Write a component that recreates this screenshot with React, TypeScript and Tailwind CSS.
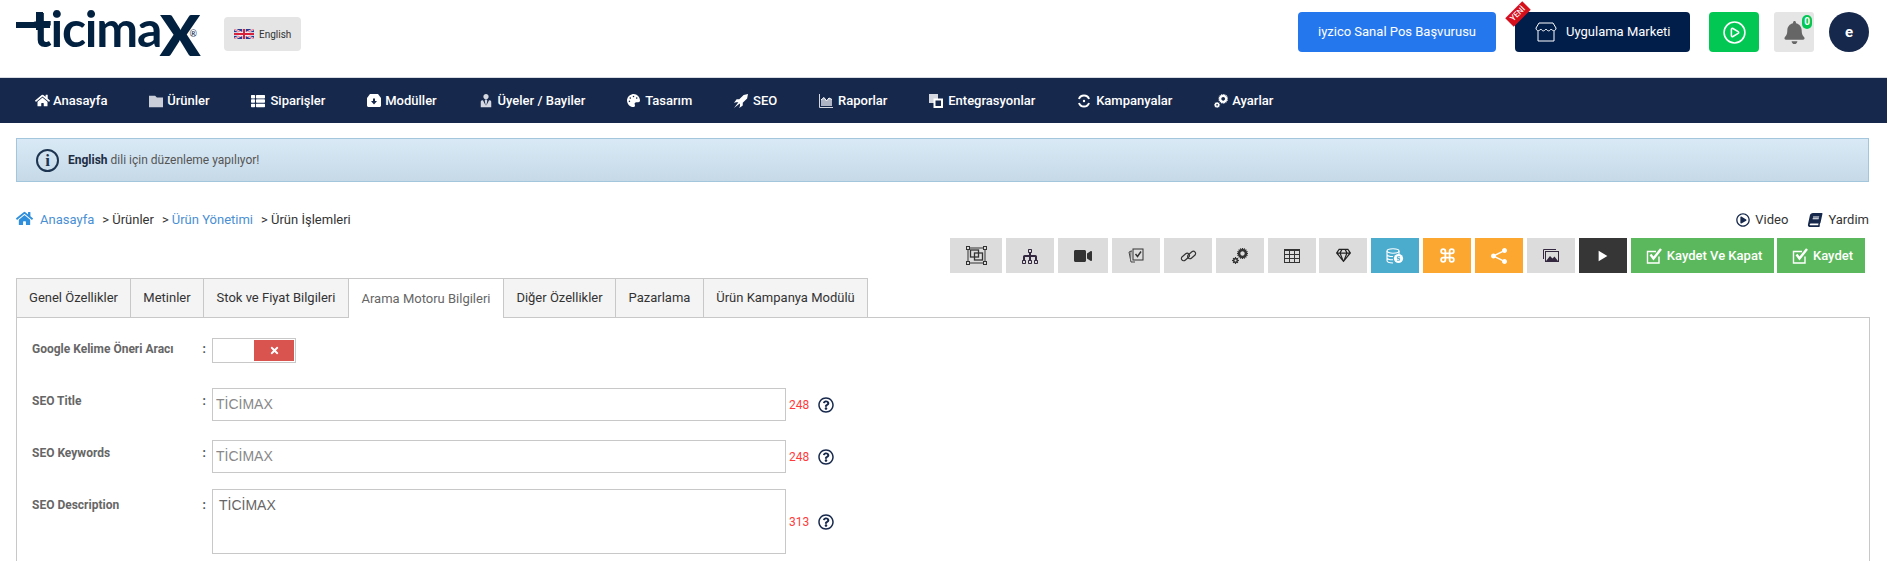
import type { ReactNode } from "react";
import {
  ImFolder,
  ImUserTie,
  ImRocket,
  ImCogs,
  ImShare2,
  ImPlay3,
  ImTree,
  ImTable2,
} from "react-icons/im";
import {
  FaBell,
  FaBook,
  FaHome,
  FaPalette,
  FaRegGem,
  FaRegPlayCircle,
  FaRegQuestionCircle,
  FaThList,
  FaTimes,
  FaVideo,
} from "react-icons/fa";
import { CirclePlay, Command } from "lucide-react";

function FlagUk() {
  return (
    <svg width="20" height="10" viewBox="0 0 60 30" className="shrink-0">
      <rect width="60" height="30" fill="#2b3a8f" />
      <path d="M0 0L60 30M60 0L0 30" stroke="#fff" strokeWidth="6" />
      <path d="M0 0L60 30M60 0L0 30" stroke="#d8213a" strokeWidth="2" />
      <path d="M30 0V30M0 15H60" stroke="#fff" strokeWidth="10" />
      <path d="M30 0V30M0 15H60" stroke="#d8213a" strokeWidth="6" />
    </svg>
  );
}

function CheckBox({ size = 16 }: { size?: number }) {
  return (
    <svg width={size} height={size} viewBox="0 0 16 16" fill="none" className="shrink-0">
      <path d="M13 8.5V15H1.5V3.5H10" stroke="#fff" strokeWidth="1.4" />
      <path d="M4.5 6.5L7.5 10.5L15 1" stroke="#fff" strokeWidth="2.4" />
    </svg>
  );
}

function MarketIcon() {
  return (
    <svg width="22" height="20" viewBox="0 0 22 20" fill="none" stroke="#fff" strokeWidth="1" className="shrink-0">
      <path d="M4 1H18L21 6C21 9 18 9.500 16 7C14.500 9.500 13 9.500 11 7C9 9.500 7.500 9.500 6 7C4 9.500 1 9 1 6Z" />
      <path d="M3 9V19H19V9" />
    </svg>
  );
}

function DrawerIcon() {
  return (
    <svg width="14" height="13" viewBox="0 0 14 13">
      <path d="M3 0H11L14 4V11.500C14 12.300 13.300 13 12.500 13H1.500C0.700 13 0 12.300 0 11.500V4Z" fill="#fff" />
      <path d="M6 4.500H8V7H10L7 10.500L4 7H6Z" fill="#16284c" />
    </svg>
  );
}

function ChartIcon() {
  return (
    <svg width="14" height="14" viewBox="0 0 14 14">
      <path d="M0.500 0V13.500H14" stroke="#d5d8e0" strokeWidth="1" fill="none" />
      <path d="M2 12V6L5 3.500L7.500 7L10 4L13 5.500V12Z" fill="#aeb4c4" />
      <path d="M2 6L5 3.500L7.500 7L10 4L13 5.500" stroke="#fff" strokeWidth="1" fill="none" />
    </svg>
  );
}

function CloneIcon() {
  return (
    <svg width="14" height="14" viewBox="0 0 14 14">
      <rect x="0" y="0" width="9" height="9" fill="#d5d8e0" />
      <rect x="4.500" y="4.500" width="9.500" height="9.500" fill="#fff" />
      <rect x="6.500" y="6.500" width="5.500" height="5.500" fill="#16284c" />
    </svg>
  );
}

function CampaignIcon() {
  return (
    <svg width="14" height="14" viewBox="0 0 14 14" fill="none" stroke="#fff">
      <path d="M2 5C3 2 5 1.500 7 1.500C9 1.500 11 2 12 5" strokeWidth="2" />
      <path d="M2 9C3 12 5 12.500 7 12.500C9 12.500 11 12 12 9" strokeWidth="2" />
      <circle cx="7" cy="7" r="1.200" fill="#fff" stroke="none" />
    </svg>
  );
}

function GroupIcon() {
  return (
    <svg width="21" height="19" viewBox="0 0 21 19" fill="none" stroke="#333">
      <rect x="2" y="2" width="17" height="15" strokeWidth="1" />
      <rect x="0.500" y="0.500" width="3" height="3" fill="#dcdcdc" />
      <rect x="17.500" y="0.500" width="3" height="3" fill="#dcdcdc" />
      <rect x="0.500" y="15.500" width="3" height="3" fill="#dcdcdc" />
      <rect x="17.500" y="15.500" width="3" height="3" fill="#dcdcdc" />
      <rect x="4.500" y="4" width="8" height="7" strokeWidth="1.300" />
      <rect x="8.500" y="7" width="8" height="7" strokeWidth="1.300" />
    </svg>
  );
}

function ChainIcon() {
  return (
    <svg width="17" height="12" viewBox="0 0 17 12" fill="none" stroke="#333" strokeWidth="1.200">
      <rect x="0.800" y="5" width="9" height="4.500" rx="2.250" transform="rotate(-40 5 7)" />
      <rect x="7.200" y="2.500" width="9" height="4.500" rx="2.250" transform="rotate(-40 12 5)" />
    </svg>
  );
}

function ProductImagesIcon() {
  return (
    <svg width="16" height="15" viewBox="0 0 16 15" fill="none">
      <path d="M4 3L1 4L3 14L7 14" stroke="#444" strokeWidth="1" />
      <path d="M3 2.500L2.500 12.500" stroke="#666" strokeWidth="1" />
      <rect x="5" y="1" width="10" height="11" fill="#ddd" stroke="#333" strokeWidth="1" />
      <path d="M7.500 6L9.500 8.500L13 3.500" stroke="#333" strokeWidth="1.500" />
    </svg>
  );
}

function PicturesIcon() {
  return (
    <svg width="16" height="13" viewBox="0 0 16 13" fill="none" stroke="#33283f">
      <path d="M0.500 10V0.500H13" strokeWidth="1" />
      <rect x="2.500" y="2.500" width="13" height="10" fill="#dcdcdc" strokeWidth="1" />
      <path d="M3 12L7 7L9.500 9.500L11.500 7.500L15 12Z" fill="#33283f" stroke="none" />
    </svg>
  );
}

function CoinsIcon() {
  return (
    <svg width="18" height="16" viewBox="0 0 18 16" fill="none" stroke="#fff" strokeWidth="1.100">
      <ellipse cx="7" cy="3" rx="6" ry="2.200" />
      <path d="M1 3V12.500C1 14 4 15 7 15M13 3V6M1 6.200C1 7.600 4 8.500 7 8.500M1 9.500C1 11 4 11.800 7 11.800" />
      <circle cx="12.500" cy="10.500" r="4.600" fill="#fff" stroke="none" />
      <path d="M14 8.800H11.400V10.500H13.600V12.200H11" stroke="#4bacce" strokeWidth="1" />
    </svg>
  );
}

const navItems: { label: string; icon: ReactNode; gap: string }[] = [
  { label: "Anasayfa", icon: <FaHome className="text-white" size={15} />, gap: "gap-[3px]" },
  { label: "Ürünler", icon: <ImFolder className="text-[#c9ced9]" size={14} />, gap: "gap-[4px]" },
  { label: "Siparişler", icon: <FaThList className="text-white" size={14} />, gap: "gap-[5px]" },
  { label: "Modüller", icon: <DrawerIcon />, gap: "gap-[4px]" },
  { label: "Üyeler / Bayiler", icon: <ImUserTie className="text-[#d5d8e0]" size={14} />, gap: "gap-[5px]" },
  { label: "Tasarım", icon: <FaPalette className="text-white" size={13} />, gap: "gap-[5px]" },
  { label: "SEO", icon: <ImRocket className="text-white" size={14} />, gap: "gap-[5px]" },
  { label: "Raporlar", icon: <ChartIcon />, gap: "gap-[5px]" },
  { label: "Entegrasyonlar", icon: <CloneIcon />, gap: "gap-[5px]" },
  { label: "Kampanyalar", icon: <CampaignIcon />, gap: "gap-[5px]" },
  { label: "Ayarlar", icon: <ImCogs className="text-white" size={14} />, gap: "gap-[4px]" },
];

const toolButtons: { icon: ReactNode; cls: string }[] = [
  { icon: <GroupIcon />, cls: "w-[52px] bg-[#dcdcdc]" },
  { icon: <ImTree size={16} className="text-[#33283f]" />, cls: "w-[48px] bg-[#dcdcdc]" },
  { icon: <FaVideo size={18} className="text-[#333]" />, cls: "w-[50px] bg-[#dcdcdc]" },
  { icon: <ProductImagesIcon />, cls: "w-[48px] bg-[#dcdcdc]" },
  { icon: <ChainIcon />, cls: "w-[48px] bg-[#dcdcdc]" },
  { icon: <ImCogs size={16} className="text-[#333]" />, cls: "w-[48px] bg-[#dcdcdc]" },
  { icon: <ImTable2 size={16} className="text-[#333]" />, cls: "w-[48px] bg-[#dcdcdc] -mr-px" },
  { icon: <FaRegGem size={15} className="text-[#222]" />, cls: "w-[48px] bg-[#dcdcdc]" },
  { icon: <CoinsIcon />, cls: "w-[48px] bg-[#4bacce]" },
  { icon: <Command size={17} strokeWidth={2.5} className="text-white" />, cls: "w-[48px] bg-[#fca72f]" },
  { icon: <ImShare2 size={16} className="text-white" />, cls: "w-[48px] bg-[#fca72f]" },
  { icon: <PicturesIcon />, cls: "w-[48px] bg-[#dcdcdc]" },
  { icon: <ImPlay3 size={14} className="text-white" />, cls: "w-[48px] bg-[#363636]" },
];

const tabs = [
  { label: "Genel Özellikler", w: "w-[115px]" },
  { label: "Metinler", w: "w-[73px]" },
  { label: "Stok ve Fiyat Bilgileri", w: "w-[145px]" },
  { label: "Arama Motoru Bilgileri", w: "w-[155px]", active: true },
  { label: "Diğer Özellikler", w: "w-[112px]" },
  { label: "Pazarlama", w: "w-[88px]" },
  { label: "Ürün Kampanya Modülü", w: "w-[164px]" },
];

function FieldLabel({ children }: { children: ReactNode }) {
  return (
    <div className="flex w-[180px] shrink-0 justify-between pr-[6px] text-[12px] font-bold leading-[16px] text-[#666]">
      <span>{children}</span>
      <span className="text-[#555]">:</span>
    </div>
  );
}

function SeoField({ label, count }: { label: string; count: string }) {
  return (
    <div className="flex items-start">
      <div className="pt-[5px]">
        <FieldLabel>{label}</FieldLabel>
      </div>
      <input
        readOnly
        value="TİCİMAX"
        className="h-[33px] w-[574px] border border-[#c8c8c8] bg-white px-[3px] pb-[2px] font-['Liberation_Sans',sans-serif] text-[14px] text-[#888] outline-none"
      />
      <div className="flex h-[33px] items-center">
        <span className="ml-[3px] text-[12px] text-[#ff3b3b]">{count}</span>
        <FaRegQuestionCircle size={16} className="ml-[9px] mt-[1px] text-[#16284c]" />
      </div>
    </div>
  );
}

export default function App() {
  return (
    <div className="h-[561px] w-[1887px] overflow-hidden bg-white font-['Roboto',sans-serif]">
      {/* Header */}
      <header className="flex h-[77px] items-start justify-between pl-4 pr-[18px]">
        <div className="flex items-start">
          <div className="relative mt-[2px] flex h-[60px] w-[180px] items-start pl-[17px] font-['Lato',sans-serif] font-bold text-[#02203f]">
            <span className="mt-[1px] text-[50px] leading-[50px] tracking-[-1.2px]">ticima</span>
            <span className="-ml-[2px] mt-[1px] text-[80px] leading-[44px]">x</span>
            <span className="absolute left-0 top-[20px] h-[6px] w-[34px] bg-[#02203f]" />
            <span className="absolute left-[20px] top-[10px] h-[18px] w-[7px] bg-[#02203f]" />
            <span className="absolute right-[-1px] top-[27px] text-[9px] font-normal leading-[10px]">®</span>
          </div>
          <div className="ml-[28px] mt-[17px] flex h-[34px] w-[77px] items-center gap-[5px] rounded-[4px] bg-[#e5e5e5] pl-[10px] text-[10px] text-[#333]">
            <FlagUk />
            English
          </div>
        </div>
        <div className="mt-[12px] flex items-start">
          <button className="h-[40px] w-[198px] rounded-[4px] bg-[#2577ee] text-[13px] text-white">iyzico Sanal Pos Başvurusu</button>
          <button className="relative ml-[19px] flex h-[40px] w-[175px] items-center gap-[9px] rounded-[4px] bg-[#011e4b] pl-[20px] text-[13px] text-white">
            <MarketIcon />
            Uygulama Marketi
            <span className="absolute left-[-9px] top-[-4px] flex h-[12px] w-[24px] -rotate-45 items-center justify-center bg-[#d50f1c] text-[8px] font-medium leading-none">YENİ</span>
          </button>
          <div className="ml-[19px] flex h-[40px] w-[50px] items-center justify-center rounded-[4px] bg-[#03c753]">
            <CirclePlay size={25} strokeWidth={1.5} className="text-white" />
          </div>
          <div className="relative ml-[15px] flex h-[40px] w-[40px] items-center justify-center rounded-[3px] bg-[#e5e5e5]">
            <FaBell size={23} className="mt-[1px] text-[#666]" />
            <span className="absolute right-[2px] top-[3px] flex h-[14px] w-[10px] items-center justify-center rounded-full bg-[#03c753] text-[10px] font-bold leading-none text-white">0</span>
          </div>
          <div className="ml-[15px] flex h-[40px] w-[40px] items-center justify-center rounded-full bg-[#16284c] text-[15px] font-bold text-white">e</div>
        </div>
      </header>

      {/* Main menu */}
      <nav className="flex h-[46px] items-center gap-[41.8px] border-t border-[#d9dde3] bg-[#16284c] pl-[35px] text-[13px] font-medium text-white">
        {navItems.map((item) => (
          <div key={item.label} className={`flex items-center whitespace-nowrap ${item.gap}`}>
            {item.icon}
            <span>{item.label}</span>
          </div>
        ))}
      </nav>

      {/* Language notice */}
      <div className="mx-4 mt-[15px] flex h-[44px] w-[1853px] items-center gap-[11px] border border-[#a3c6dd] bg-gradient-to-b from-[#d9eaf6] to-[#c6d9e7] pl-[19px] text-[12px] text-[#555]">
        <span className="flex h-[23px] w-[23px] items-center justify-center rounded-full border-2 border-[#1d3550] font-['Liberation_Serif',serif] text-[17px] font-bold leading-none text-[#1d3550]">i</span>
        <span className="-ml-[2px]">
          <b className="text-[#1d2e44]">English</b> dili için düzenleme yapılıyor!
        </span>
      </div>

      {/* Breadcrumb */}
      <div className="mt-[29px] flex h-[18px] items-center justify-between pl-4 pr-[18px] text-[13px]">
        <div className="flex items-center text-[#333]">
          <FaHome size={17} className="mr-[7px] -mt-[3px] text-[#2f8fdc]" />
          <span className="text-[#4a8fd4]">Anasayfa</span>
          <span className="ml-[8px]">&gt; Ürünler</span>
          <span className="ml-[8px]">&gt; </span>
          <span className="ml-[3px] text-[#4a8fd4]">Ürün Yönetimi</span>
          <span className="ml-[8px]">&gt; Ürün İşlemleri</span>
        </div>
        <div className="flex items-center text-[#333]">
          <FaRegPlayCircle size={14} className="mr-[5px] text-[#16284c]" />
          <span>Video</span>
          <FaBook size={14} className="ml-[20px] mr-[6px] -skew-x-12 text-[#16284c]" />
          <span>Yardim</span>
        </div>
      </div>

      {/* Toolbar */}
      <div className="mt-[9px] flex h-[35px] justify-end gap-[4px] pr-[22px]">
        {toolButtons.map((b, i) => (
          <div key={i} className={`flex h-[35px] items-center justify-center ${b.cls}`}>
            {b.icon}
          </div>
        ))}
        <div className="flex h-[35px] w-[143px] items-center justify-center gap-[5px] bg-[#5cb85c] pl-[3px] text-[13px] font-medium text-white">
          <CheckBox />
          Kaydet Ve Kapat
        </div>
        <div className="-ml-px flex h-[35px] w-[88px] items-center justify-center gap-[5px] bg-[#5cb85c] pl-[3px] text-[13px] font-medium text-white">
          <CheckBox />
          Kaydet
        </div>
      </div>

      {/* Tabs */}
      <div className="relative z-10 ml-4 mt-[5px] flex h-[40px] text-[13px] text-[#333]">
        {tabs.map((t, i) => (
          <div
            key={t.label}
            className={`flex h-[40px] items-center justify-center border-t border-r border-[#c8c8c8] ${t.w} ${i === 0 ? "border-l" : ""} ${t.active ? "bg-white text-[#666]" : "border-b bg-[#f4f4f4]"}`}
          >
            {t.label}
          </div>
        ))}
      </div>

      {/* Tab content */}
      <div className="-mt-px mx-4 h-[260px] w-[1854px] border border-[#c8c8c8] pl-[15px] pt-[20px]">
        <div className="flex items-start">
          <div className="pt-[3px]">
            <FieldLabel>Google Kelime Öneri Aracı</FieldLabel>
          </div>
          <div className="flex h-[25px] w-[84px] justify-end border border-[#c8c8c8] p-[1px]">
            <div className="flex h-full w-[40px] items-center justify-center bg-[#d9534f]">
              <FaTimes size={11} className="text-white" />
            </div>
          </div>
        </div>
        <div className="mt-[25px] flex flex-col gap-[19px]">
          <SeoField label="SEO Title" count="248" />
          <SeoField label="SEO Keywords" count="248" />
        </div>
        <div className="mt-[16px] flex items-start">
          <div className="pt-[8px]">
            <FieldLabel>SEO Description</FieldLabel>
          </div>
          <textarea
            readOnly
            value="TİCİMAX"
            className="h-[65px] w-[574px] resize-none border border-[#c8c8c8] bg-white px-[6px] py-[5px] font-['Liberation_Sans',sans-serif] text-[14px] text-[#666] outline-none"
          />
          <div className="flex h-[65px] items-center">
            <span className="ml-[3px] text-[12px] text-[#ff3b3b]">313</span>
            <FaRegQuestionCircle size={16} className="ml-[9px] mt-[1px] text-[#16284c]" />
          </div>
        </div>
      </div>
    </div>
  );
}
